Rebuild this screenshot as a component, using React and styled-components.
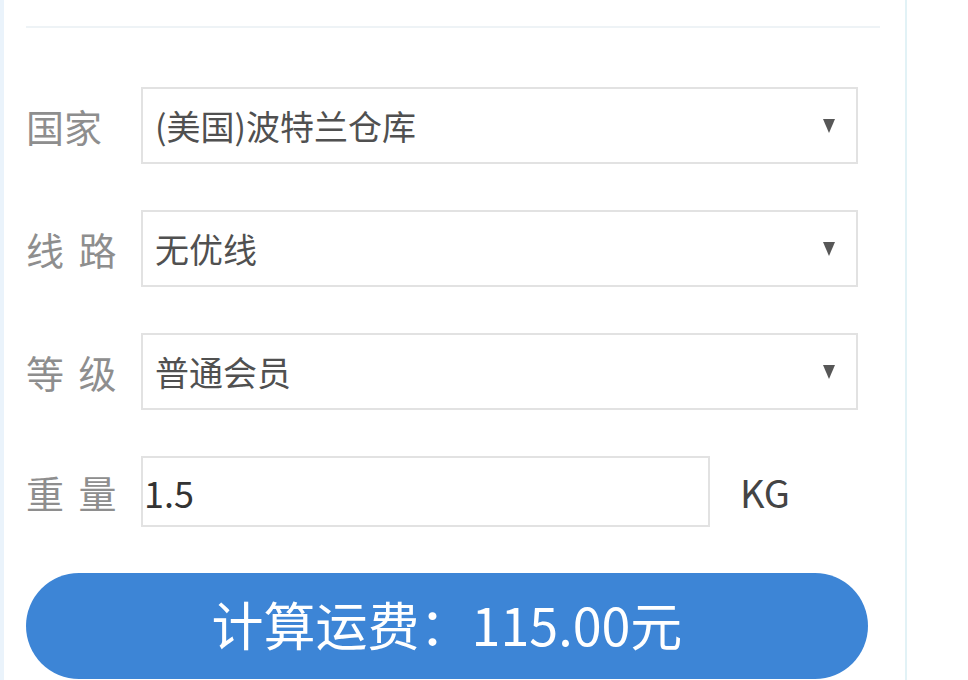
import React from "react";
import styled, { createGlobalStyle } from "styled-components";

const Global = createGlobalStyle`
  html, body { margin: 0; padding: 0; background: #fff; }
  body { font-family: "Noto Sans CJK SC", "Noto Sans", sans-serif; }
`;

const Page = styled.div`
  display: flex;
  min-height: 680px;
  background: #fff;
`;

const LeftStrip = styled.div`
  width: 4px;
  flex: none;
  background: #eaf3fb;
`;

const Panel = styled.div`
  width: 903px;
  flex: none;
  border-right: 2px solid #e2f2f6;
  padding: 26px 25px 0 22px;
  box-sizing: border-box;
`;

const Divider = styled.div`
  height: 2px;
  background: #eef3f6;
`;

const Form = styled.form`
  display: flex;
  flex-direction: column;
  gap: 46px;
  padding-top: 59px;
`;

const Row = styled.div`
  display: flex;
  align-items: center;
  height: ${(p) => p.$h}px;
`;

const Label = styled.label`
  width: 115px;
  flex: none;
  font-size: 38px;
  color: #8e8e8e;
  white-space: pre;
  word-spacing: 6px;
`;

const SelectWrap = styled.div`
  position: relative;
  width: 717px;
  height: 100%;
`;

const Select = styled.select`
  appearance: none;
  -webkit-appearance: none;
  width: 100%;
  height: 100%;
  box-sizing: border-box;
  border: 2px solid #e2e2e2;
  border-radius: 0;
  background: #fff;
  padding: 0 60px 0 12px;
  font-family: "Noto Sans CJK SC", "Noto Sans", sans-serif;
  font-size: 34px;
  color: #505050;
  outline: none;
`;

const Arrow = styled.span`
  position: absolute;
  right: 23px;
  top: 50%;
  transform: translateY(-50%);
  width: 0;
  height: 0;
  border-left: 6px solid transparent;
  border-right: 6px solid transparent;
  border-top: 14px solid #575757;
  pointer-events: none;
`;

const Input = styled.input`
  width: 569px;
  height: 100%;
  box-sizing: border-box;
  border: 2px solid #e2e2e2;
  padding: 0 0 0 1px;
  font-family: "Noto Sans CJK SC", "Noto Sans", sans-serif;
  font-size: 36px;
  color: #333;
  outline: none;
`;

const Unit = styled.span`
  margin-left: 30px;
  font-size: 38px;
  color: #444;
`;

const Button = styled.button`
  width: 842px;
  height: 106px;
  border: none;
  border-radius: 53px;
  background: #3d85d6;
  color: #fff;
  font-family: "Noto Sans CJK SC", "Noto Sans", sans-serif;
  font-size: 52px;
  line-height: 1;
  cursor: pointer;
  padding: 0 0 4px;
`;

const selects = [
  { label: "国家", value: "(美国)波特兰仓库" },
  { label: "线 路", value: "无优线" },
  { label: "等 级", value: "普通会员" },
];

export default function App() {
  return (
    <>
      <Global />
      <Page>
        <LeftStrip />
        <Panel>
          <Divider />
          <Form onSubmit={(e) => e.preventDefault()}>
            {selects.map((s) => (
              <Row key={s.label} $h={77}>
                <Label>{s.label}</Label>
                <SelectWrap>
                  <Select defaultValue={s.value}>
                    <option>{s.value}</option>
                  </Select>
                  <Arrow />
                </SelectWrap>
              </Row>
            ))}
            <Row $h={71}>
              <Label>重 量</Label>
              <Input defaultValue="1.5" />
              <Unit>KG</Unit>
            </Row>
            <Button type="submit">计算运费：115.00元</Button>
          </Form>
        </Panel>
      </Page>
    </>
  );
}
